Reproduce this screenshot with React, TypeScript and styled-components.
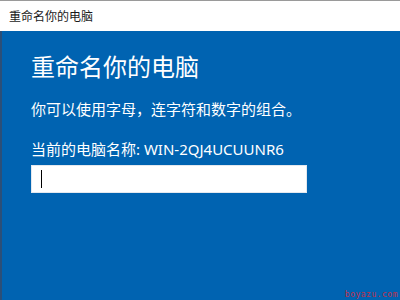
import React from 'react';
import styled, { createGlobalStyle } from 'styled-components';

const GlobalStyle = createGlobalStyle`
  html, body {
    margin: 0;
    padding: 0;
    background: #ffffff;
  }
  body {
    font-family: "Noto Sans", "Noto Sans CJK SC", sans-serif;
  }
`;

const Window = styled.div`
  display: flex;
  flex-direction: column;
  width: 400px;
  height: 300px;
  overflow: hidden;
`;

const TitleBar = styled.div`
  display: flex;
  align-items: center;
  height: 30px;
  padding-left: 9px;
  border-top: 1px solid #9a9a9a;
  background: #ffffff;
  color: #1a1a1a;
  font-size: 12px;
`;

const Body = styled.div`
  position: relative;
  flex: 1;
  display: flex;
  flex-direction: column;
  padding: 20px 0 0 29px;
  background: #0063b1;
  border-left: 2px solid #2b4f78;
  color: #ffffff;
`;

const Heading = styled.div`
  font-size: 24px;
  line-height: 32px;
`;

const Text = styled.div<{ $gap: number }>`
  margin-top: ${(p) => p.$gap}px;
  font-size: 15px;
  line-height: 20px;
`;

const NameInput = styled.div`
  display: flex;
  align-items: center;
  box-sizing: border-box;
  width: 276px;
  height: 28px;
  margin-top: 6px;
  padding-left: 9px;
  background: #ffffff;
  border: 1px solid #e4e8ee;
`;

const Caret = styled.span`
  width: 1px;
  height: 18px;
  background: #000000;
`;

const Watermark = styled.span`
  position: absolute;
  right: 2px;
  bottom: 1px;
  color: #c0304a;
  font-family: "DejaVu Sans Mono", monospace;
  font-size: 8px;
  line-height: 9px;
  letter-spacing: 0.5px;
`;

const App = () => {
  return (
    <Window>
      <GlobalStyle />
      <TitleBar>重命名你的电脑</TitleBar>
      <Body>
        <Heading>重命名你的电脑</Heading>
        <Text $gap={16}>你可以使用字母，连字符和数字的组合。</Text>
        <Text $gap={20}>当前的电脑名称: WIN-2QJ4UCUUNR6</Text>
        <NameInput>
          <Caret />
        </NameInput>
        <Watermark>boyazu.com</Watermark>
      </Body>
    </Window>
  );
};

export default App;
